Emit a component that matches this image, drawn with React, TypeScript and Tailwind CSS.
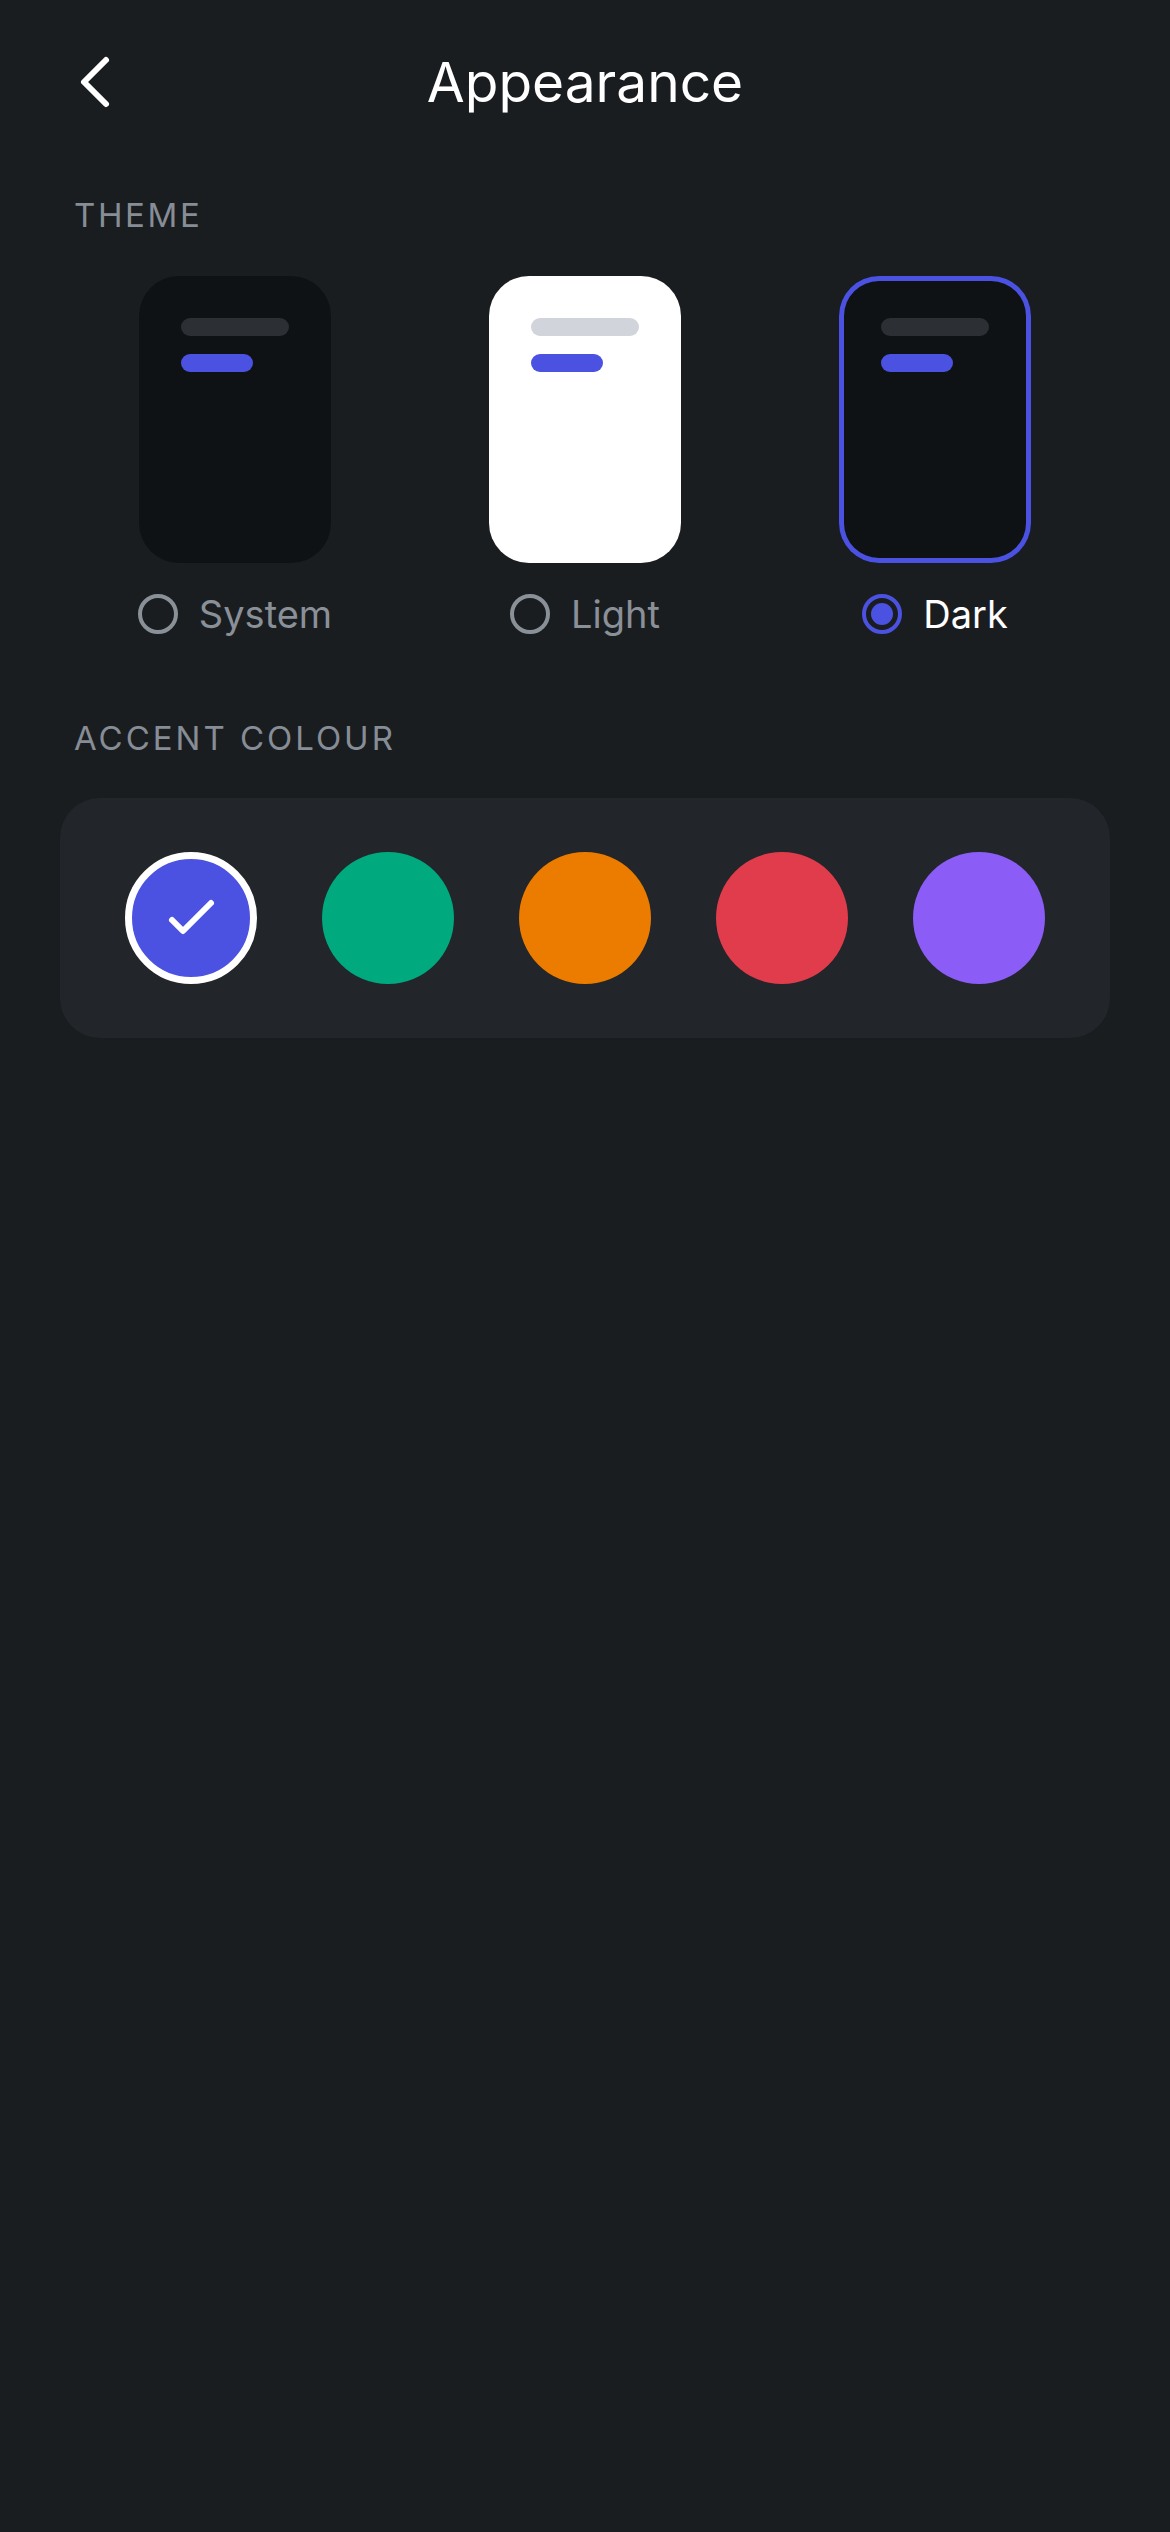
import React from "react";

const accents = ["#4b51e1", "#00a97e", "#ec7c00", "#e13c4c", "#8b5cf6"];

function ThemeCard({ variant, selected }: { variant: "system" | "light" | "dark"; selected?: boolean }) {
  const light = variant === "light";
  return (
    <div
      className={
        "w-[192px] h-[287px] rounded-[40px] pt-[42px] px-[42px] flex flex-col gap-[18px] " +
        (light ? "bg-white " : "bg-[#0f1215] ") +
        (selected ? "ring-[5px] ring-inset ring-[#4b51e1]" : "")
      }
    >
      <div className={"h-[18px] w-[108px] rounded-full " + (light ? "bg-[#d1d5db]" : "bg-[#2c2f34]")} />
      <div className="h-[18px] w-[72px] rounded-full bg-[#4b51e1]" />
    </div>
  );
}

function Radio({ label, selected }: { label: string; selected?: boolean }) {
  return (
    <div className="flex items-center gap-[21px] h-[46px]">
      {selected ? (
        <div className="w-[40px] h-[40px] rounded-full border-[4px] border-[#4b51e1] flex items-center justify-center">
          <div className="w-[22px] h-[22px] rounded-full bg-[#4b51e1]" />
        </div>
      ) : (
        <div className="w-[40px] h-[40px] rounded-full border-[4px] border-[#8a9098]" />
      )}
      <span className={"text-[38px] leading-[46px] " + (selected ? "text-white" : "text-[#8a9098]")}>{label}</span>
    </div>
  );
}

export default function App() {
  return (
    <div className="min-h-screen w-full bg-[#1a1d20] text-white" style={{ fontFamily: "Inter, 'Noto Sans', sans-serif" }}>
      <header className="h-[164px] grid grid-cols-[1fr_auto_1fr] items-center px-[74px]">
        <button className="w-[50px] h-[60px] flex items-center justify-start">
          <svg width="40" height="56" viewBox="0 0 40 56" fill="none">
            <path d="M32 6 L10 28 L32 50" stroke="white" strokeWidth="6" strokeLinecap="round" strokeLinejoin="round" />
          </svg>
        </button>
        <h1 className="text-[55px] leading-[64px] font-normal">Appearance</h1>
        <div />
      </header>

      <section className="px-[60px]">
        <h2 className="mt-[31px] pl-[14px] text-[33px] leading-[40px] tracking-[0.08em] text-[#878d96]">THEME</h2>
        <div className="mt-[41px] grid grid-cols-3">
          <div className="flex flex-col items-center">
            <ThemeCard variant="system" />
            <div className="mt-[28px]"><Radio label="System" /></div>
          </div>
          <div className="flex flex-col items-center">
            <ThemeCard variant="light" />
            <div className="mt-[28px]"><Radio label="Light" /></div>
          </div>
          <div className="flex flex-col items-center">
            <ThemeCard variant="dark" selected />
            <div className="mt-[28px]"><Radio label="Dark" selected /></div>
          </div>
        </div>

        <h2 className="mt-[81px] pl-[14px] text-[33px] leading-[40px] tracking-[0.09em] text-[#878d96]">ACCENT COLOUR</h2>
        <div className="mt-[40px] h-[240px] rounded-[40px] bg-[#222529] px-[65px] flex items-center justify-between">
          {accents.map((c, i) => (
            <div
              key={c}
              className={"w-[132px] h-[132px] rounded-full flex items-center justify-center " + (i === 0 ? "border-[7px] border-white" : "")}
              style={{ backgroundColor: c }}
            >
              {i === 0 && (
                <svg width="60" height="60" viewBox="0 0 60 60" fill="none">
                  <path d="M11 32 L22 43 L50 15" stroke="white" strokeWidth="6" strokeLinecap="round" strokeLinejoin="round" />
                </svg>
              )}
            </div>
          ))}
        </div>
      </section>
    </div>
  );
}
